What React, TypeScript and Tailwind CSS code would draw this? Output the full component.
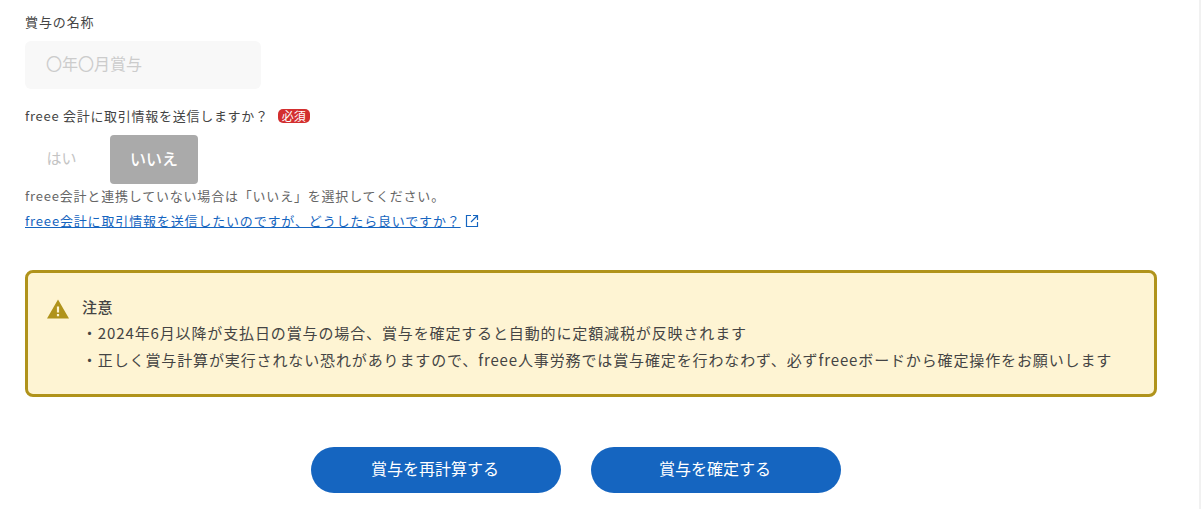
export default function App() {
  const font = { fontFamily: '"Noto Sans CJK JP", "Noto Sans", sans-serif' };
  return (
    <div style={font} className="h-[509px] w-[1201px] overflow-hidden bg-white flex">
      <main className="w-[1199px] pl-[25px] pr-[42px] pt-[13px] flex flex-col">
        <label className="text-[13px] leading-[18px] tracking-[0.9px] text-[#444]">賞与の名称</label>
        <div className="mt-[10px] w-[236px] h-[48px] rounded-[6px] bg-[#f8f8f8] flex items-center pl-[21px] pb-[4px] text-[16px] text-[#ccc]">〇年〇月賞与</div>
        <div className="mt-[18px] flex items-center h-[18px] text-[13px] tracking-[0.72px] text-[#444]">
          <span>freee 会計に取引情報を送信しますか？</span>
          <span className="ml-[9px] h-[14px] w-[32px] rounded-[5px] bg-[#d32f2f] text-white text-[12px] leading-[14px] text-center tracking-normal">必須</span>
        </div>
        <div className="mt-[10px] flex">
          <div className="w-[73px] h-[49px] flex items-center justify-center pb-[2px] text-[15px] text-[#c4c4c4]">はい</div>
          <div className="ml-[12px] w-[88px] h-[49px] rounded-[4px] bg-[#aaa] flex items-center justify-center pb-[3px] text-[16px] font-medium text-white">いいえ</div>
        </div>
        <p className="mt-[1px] h-[22px] text-[13px] leading-[22px] tracking-[0.8px] text-[#666]">freee会計と連携していない場合は「いいえ」を選択してください。</p>
        <a className="mt-[3px] h-[22px] flex items-center text-[13px] tracking-[0.84px] text-[#1565c0] underline w-max">
          freee会計に取引情報を送信したいのですが、どうしたら良いですか？
          <svg className="ml-[4px]" width="14" height="14" viewBox="0 0 14 14" fill="none" stroke="#1565c0" strokeWidth="1.2">
            <path d="M6 1.5H1.5v11h11V8" />
            <path d="M8 1.5h4.5V6M12.5 1.5L6 8" />
          </svg>
        </a>
        <div className="mt-[38px] h-[127px] rounded-[8px] border-[3px] border-[#b0931b] bg-[#fef4d3] flex pl-[19px] pt-[24px] text-[#444]">
          <svg className="mt-[2px] shrink-0" width="22" height="20" viewBox="0 0 22 20">
            <path fill="#b0931b" fillRule="evenodd" d="M11 .5 L22 19.5 H0 Z M9.9 7.5h2.2v6H9.9z M9.9 15h2.2v2.2H9.9z" />
          </svg>
          <div className="ml-[13px] text-[15px] tracking-[0.87px]">
            <div className="font-medium leading-[20px] h-[20px] tracking-[0.5px]">注意</div>
            <div className="mt-[6px] leading-[20px]">・2024年6月以降が支払日の賞与の場合、賞与を確定すると自動的に定額減税が反映されます</div>
            <div className="mt-[7px] leading-[20px]">・正しく賞与計算が実行されない恐れがありますので、freee人事労務では賞与確定を行わなわず、必ずfreeeボードから確定操作をお願いします</div>
          </div>
        </div>
        <div className="mt-[50px] w-[1102px] flex justify-center gap-[30px]">
          <button className="w-[250px] h-[46px] rounded-full bg-[#1565c0] text-white text-[16px] pb-[5px] pr-[2px]">賞与を再計算する</button>
          <button className="w-[250px] h-[46px] rounded-full bg-[#1565c0] text-white text-[16px] pb-[5px] pr-[2px]">賞与を確定する</button>
        </div>
      </main>
      <div className="w-[2px] h-full bg-[#f1f1f1]" />
    </div>
  );
}
